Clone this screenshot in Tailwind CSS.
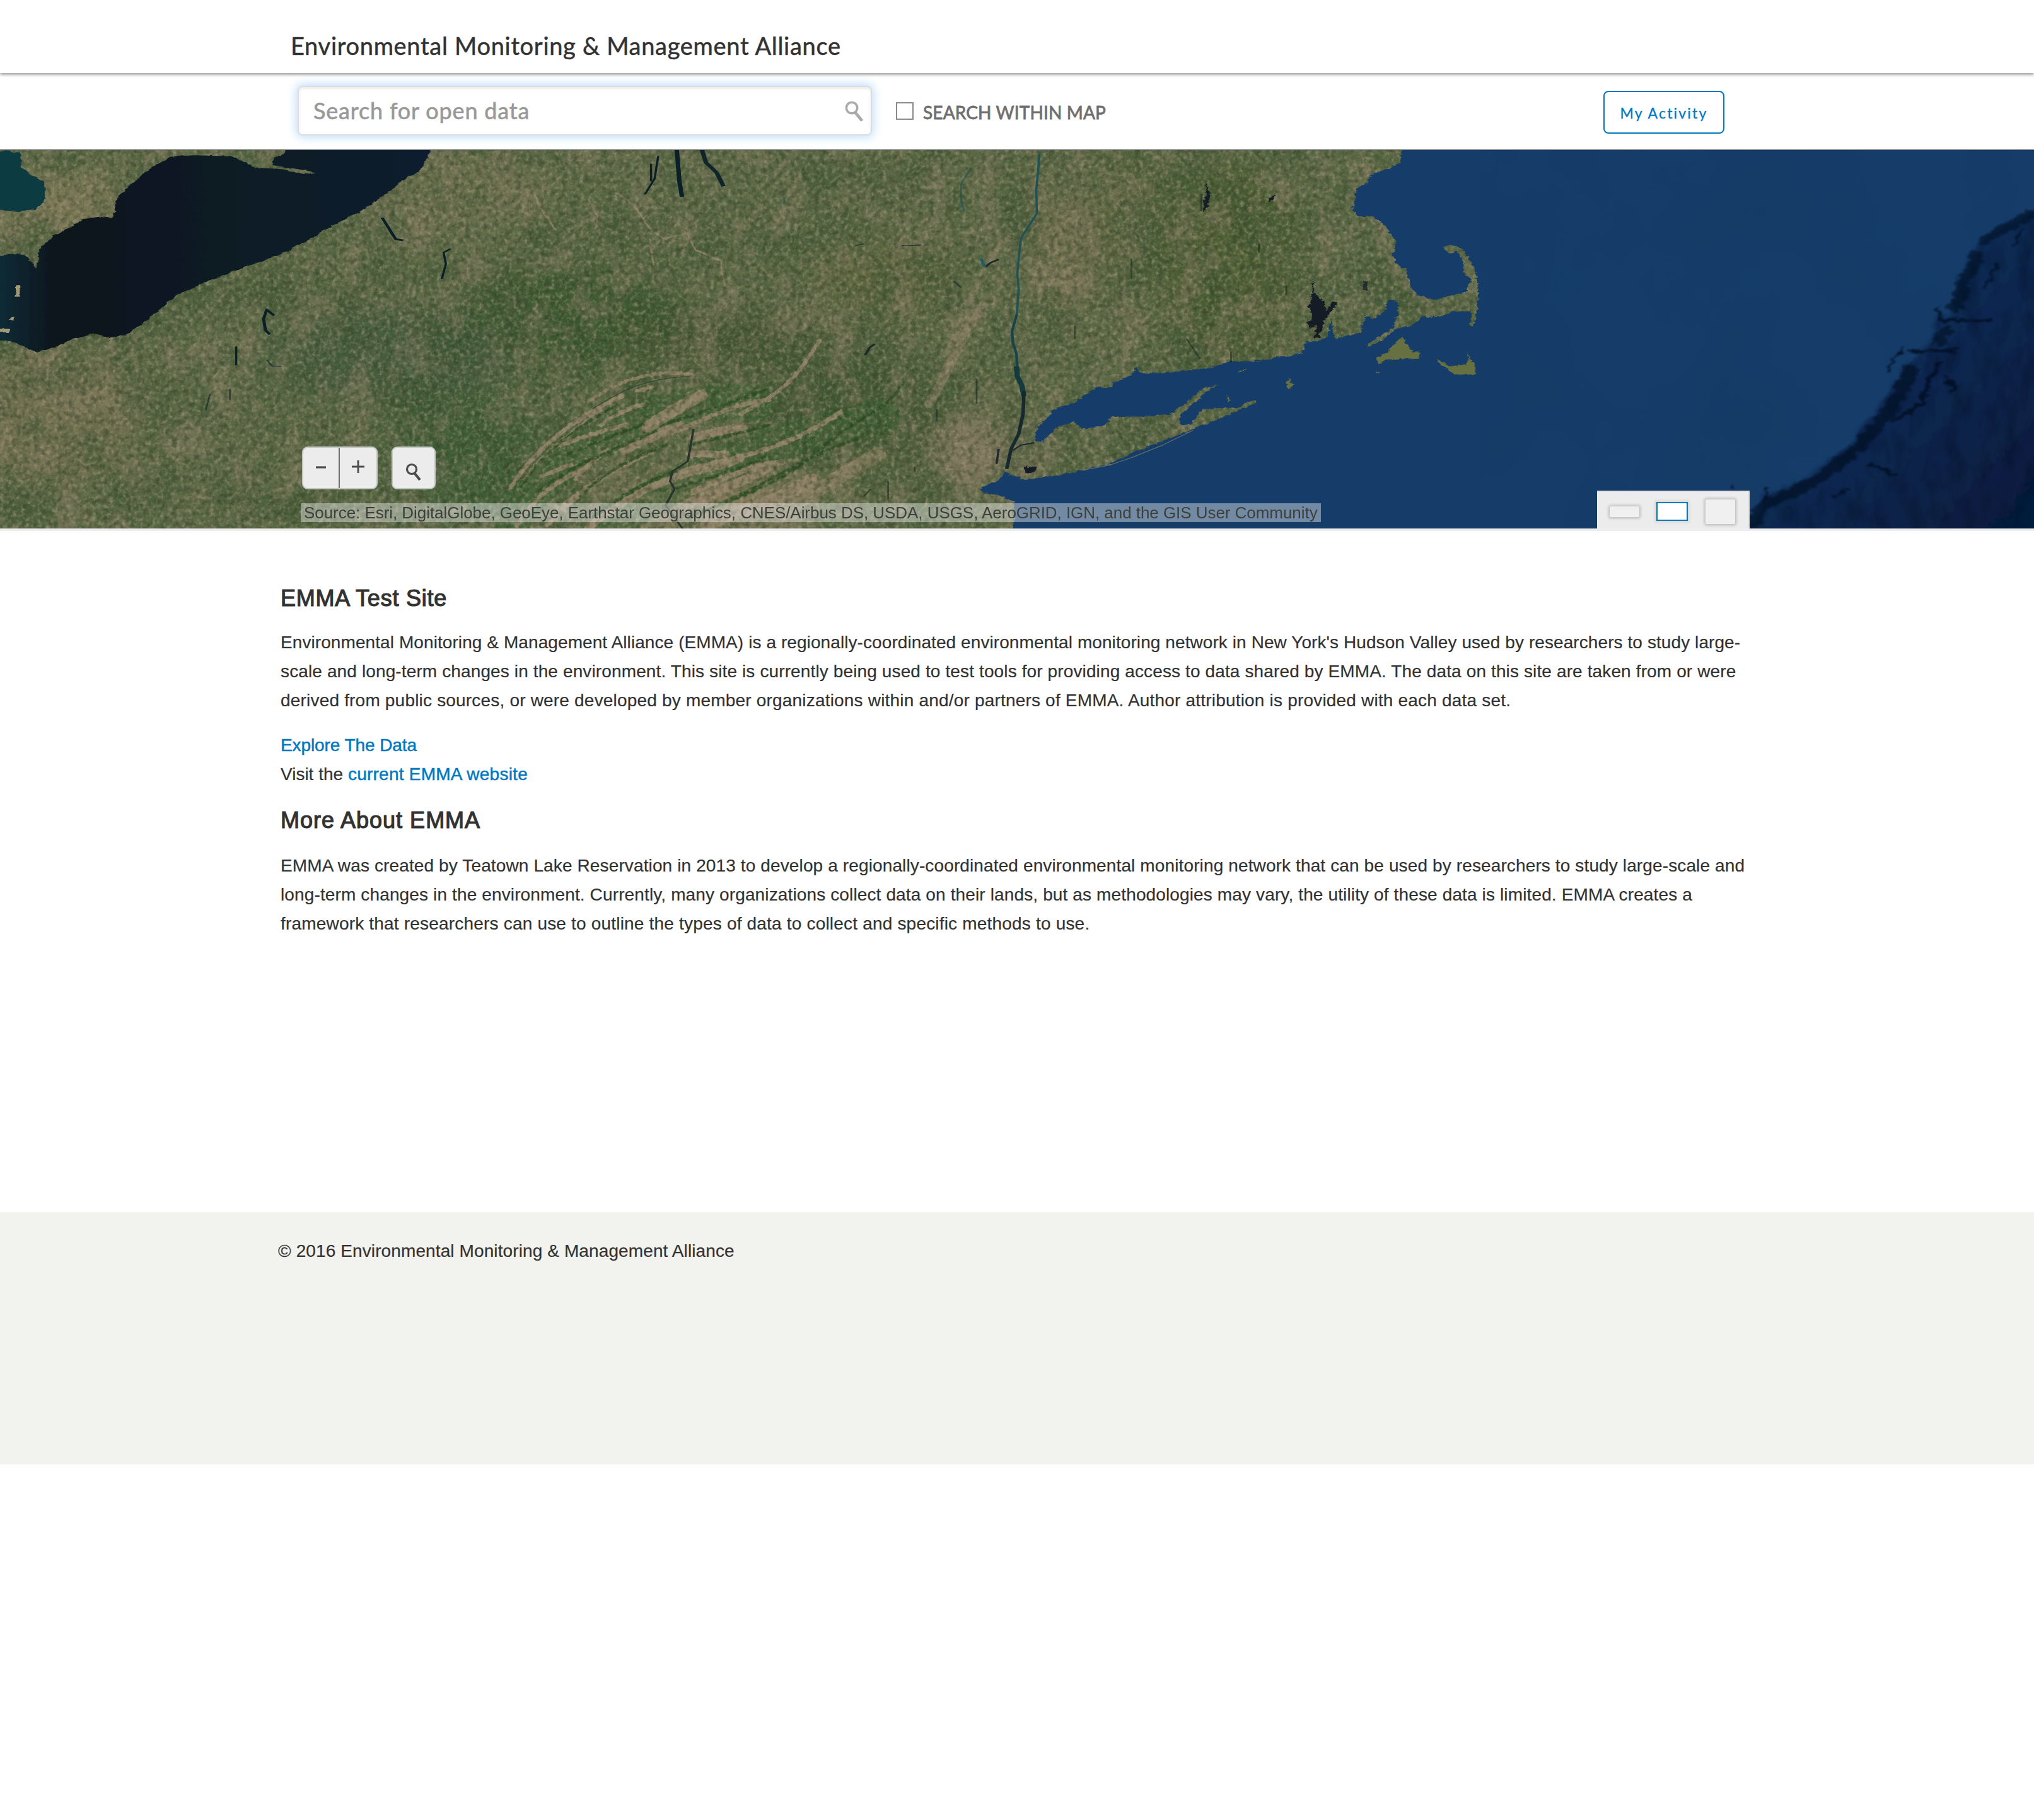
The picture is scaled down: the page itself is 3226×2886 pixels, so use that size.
<!DOCTYPE html>
<html lang="en">
<head>
<meta charset="utf-8">
<title>Environmental Monitoring &amp; Management Alliance</title>
<script src="https://cdn.jsdelivr.net/npm/@tailwindcss/browser@4"></script>
</head>
<body class="w-[3226px] h-[2886px] overflow-hidden bg-white text-[#323232] font-['Liberation_Sans',Arial,sans-serif]">

<header class="relative z-10 h-[116px] bg-white shadow-[0_2px_5px_0_rgba(0,0,0,0.45)] flex">
  <h1 class="pl-[461px] pt-[48px] leading-[48px] text-[38px] tracking-[0.7px] font-['Lato',sans-serif] [-webkit-text-stroke:0.5px_#323232] whitespace-nowrap">Environmental Monitoring &amp; Management Alliance</h1>
</header>

<div class="h-[122px] bg-white border-b-2 border-[#999b9b] flex items-start font-['Lato',sans-serif]">
  <div class="ml-[472px] mt-[20px] w-[911px] h-[79px] rounded-[8px] border-2 border-[#dedede] bg-white shadow-[0_0_14px_3px_rgba(160,208,252,0.65),inset_0_3px_4px_rgba(0,0,0,0.08)] flex items-center justify-between pl-[23px] pr-[10px]">
    <span class="text-[36px] leading-[48px] tracking-[0.83px] -mt-[2px] text-[#999] [-webkit-text-stroke:0.6px_#999]">Search for open data</span>
    <svg class="w-[32px] h-[34px]" viewBox="0 0 32 34" fill="none" stroke="#a9a9a9"><circle cx="12" cy="12" r="8.7" stroke-width="3.6"/><path d="M17.5 19.500L27 31" stroke-width="4.800" stroke-linecap="round"/></svg>
  </div>
  <div class="ml-[38px] mt-[46px] w-[28px] h-[28px] border-2 border-[#8a8a8a]"></div>
  <span class="ml-[15px] mt-[42px] text-[28px] leading-[40px] tracking-[0.15px] text-[#6f6f6f] [-webkit-text-stroke:0.8px_#6f6f6f] whitespace-nowrap">SEARCH WITHIN MAP</span>
  <div class="ml-auto mr-[491px] mt-[28px] w-[192px] h-[68px] rounded-[8px] border-2 border-[#0079c1] flex items-center justify-center pt-[2px] text-[23px] leading-[32px] tracking-[2.2px] text-[#0079c1] [-webkit-text-stroke:0.3px_#0079c1] whitespace-nowrap">My Activity</div>
</div>

<section class="relative h-[604px] border-b-4 border-[#eeeeee] overflow-hidden bg-[#133e69]">
  <svg class="absolute left-0 top-0 w-[3226px] h-[600px]" viewBox="0 238 3226 600" preserveAspectRatio="none">
    <defs>
      <filter id="speckTan" x="0" y="0" width="1" height="1" color-interpolation-filters="sRGB"><feTurbulence type="fractalNoise" baseFrequency="0.15" numOctaves="4" seed="4"/><feColorMatrix values="0 0 0 0 0.64  0 0 0 0 0.60  0 0 0 0 0.49  2.6 0 0 0 -1.15"/></filter>
      <filter id="speckDark" x="0" y="0" width="1" height="1" color-interpolation-filters="sRGB"><feTurbulence type="fractalNoise" baseFrequency="0.11" numOctaves="4" seed="19"/><feColorMatrix values="0 0 0 0 0.18  0 0 0 0 0.24  0 0 0 0 0.14  0 2.6 0 0 -1.1"/></filter>
      <filter id="patchTan" x="0" y="0" width="1" height="1" color-interpolation-filters="sRGB"><feTurbulence type="fractalNoise" baseFrequency="0.022 0.015" numOctaves="6" seed="14"/><feColorMatrix values="0 0 0 0 0.55  0 0 0 0 0.50  0 0 0 0 0.40  5 0 0 0 -2.35"/></filter>
      <filter id="patchGreen" x="0" y="0" width="1" height="1" color-interpolation-filters="sRGB"><feTurbulence type="fractalNoise" baseFrequency="0.014 0.012" numOctaves="6" seed="31"/><feColorMatrix values="0 0 0 0 0.24  0 0 0 0 0.34  0 0 0 0 0.20  0 4 0 0 -1.85"/></filter>
      <filter id="seabed" x="0" y="0" width="1" height="1" color-interpolation-filters="sRGB"><feTurbulence type="fractalNoise" baseFrequency="0.006 0.005" numOctaves="4" seed="2"/><feColorMatrix values="0 0 0 0 0.06  0 0 0 0 0.19  0 0 0 0 0.36  1.2 0 0 0 -0.5"/></filter>
      <filter id="abyss" x="0" y="0" width="1" height="1" color-interpolation-filters="sRGB"><feTurbulence type="fractalNoise" baseFrequency="0.035 0.018" numOctaves="4" seed="12"/><feColorMatrix values="0 0 0 0 0.01  0 0 0 0 0.03  0 0 0 0 0.1  3 0 0 0 -1.35"/></filter>
      <filter id="coast" x="-0.02" y="-0.02" width="1.04" height="1.04"><feTurbulence type="fractalNoise" baseFrequency="0.09" numOctaves="3" seed="5"/><feDisplacementMap in="SourceGraphic" scale="14" xChannelSelector="R" yChannelSelector="G"/></filter>
      <filter id="wobble" x="-0.1" y="-0.1" width="1.2" height="1.2"><feTurbulence type="fractalNoise" baseFrequency="0.05" numOctaves="3" seed="9"/><feDisplacementMap in="SourceGraphic" scale="12" xChannelSelector="R" yChannelSelector="G"/><feGaussianBlur stdDeviation="0.8"/></filter>
      <filter id="rough" x="-0.2" y="-0.2" width="1.4" height="1.4"><feTurbulence type="fractalNoise" baseFrequency="0.04" numOctaves="3" seed="7"/><feDisplacementMap in="SourceGraphic" scale="34" xChannelSelector="R" yChannelSelector="G"/><feGaussianBlur stdDeviation="2.5"/></filter>
      <filter id="soft" x="-0.3" y="-0.3" width="1.6" height="1.6"><feGaussianBlur stdDeviation="28"/></filter>
      <linearGradient id="lake" x1="0" y1="0" x2="1" y2="0"><stop offset="0" stop-color="#0b2f3a"/><stop offset="0.14" stop-color="#07161d"/><stop offset="0.5" stop-color="#081a23"/><stop offset="1" stop-color="#0a1f2e"/></linearGradient>
      <linearGradient id="deep" x1="0" y1="0" x2="1" y2="1"><stop offset="0" stop-color="#103461"/><stop offset="0.55" stop-color="#0a2850"/><stop offset="1" stop-color="#051737"/></linearGradient>
      <clipPath id="deepClip"><path transform="translate(2126 220) scale(.70151 .39667)" d="M1568 275 1500 350 1440 420 1420 500 1395 560 1380 680 1350 720 1345 800 1290 890 1225 1050 1150 1220 1060 1350 960 1430 900 1563H1570Z"/></clipPath>
    </defs>

    <!-- land base and broad tone variation -->
    <rect y="236" width="2400" height="602" fill="#5b6946"/>
    <g filter="url(#soft)">
      <ellipse cx="900" cy="510" rx="190" ry="90" fill="#3c5a32"/>
      <ellipse cx="620" cy="560" rx="200" ry="70" fill="#455d3c"/>
      <ellipse cx="740" cy="720" rx="130" ry="100" fill="#415f39"/>
      <ellipse cx="1350" cy="650" rx="160" ry="90" fill="#465c38"/>
      <ellipse cx="1150" cy="540" rx="160" ry="40" fill="#475935"/>
      <ellipse cx="1400" cy="440" rx="120" ry="50" fill="#5b653c"/>
      <ellipse cx="1950" cy="420" rx="110" ry="170" fill="#4d5f36"/>
      <ellipse cx="1790" cy="330" rx="50" ry="120" fill="#55643c"/>
      <ellipse cx="1690" cy="400" rx="60" ry="110" fill="#6f7050"/>
      <ellipse cx="1570" cy="720" rx="90" ry="60" fill="#82785f"/>
      <ellipse cx="100" cy="330" rx="110" ry="60" fill="#7d7956"/>
      <ellipse cx="80" cy="660" rx="140" ry="110" fill="#70704f"/>
      <ellipse cx="700" cy="300" rx="180" ry="60" fill="#6c714f"/>
      <ellipse cx="1130" cy="800" rx="150" ry="50" fill="#877b5b"/>
    </g>
    <rect y="236" width="2400" height="602" filter="url(#patchTan)" opacity=".45"/>
    <rect y="236" width="2400" height="602" filter="url(#patchGreen)" opacity=".5"/>

    <!-- Appalachian ridges -->
    <g transform="translate(700 240) scale(.33333)" filter="url(#wobble)" fill="none" stroke-linecap="round">
      <path stroke="#3a5f32" stroke-width="170" opacity=".5" d="M330 1760C600 1400 1000 1150 1500 1200M800 1780C1200 1500 1500 1400 2100 1260"/>
      <g stroke="#94846a" stroke-width="20" opacity=".9">
        <path d="M330 1600C420 1450 600 1280 860 1165"/><path d="M400 1560C480 1440 620 1340 760 1230"/>
        <path d="M560 1400C700 1350 800 1320 880 1300"/><path d="M640 1560C680 1500 740 1460 790 1420"/>
        <path d="M760 1300C820 1260 880 1220 960 1205"/><path d="M930 1140 1000 1120"/>
        <path d="M480 1545C540 1520 580 1500 620 1490"/><path stroke-width="46" d="M870 1420C960 1370 1050 1340 1130 1300"/>
        <path stroke-width="56" d="M980 1310C1080 1250 1150 1200 1240 1160"/><path stroke-width="16" d="M700 1190C860 1080 1000 1040 1200 1060"/>
        <path stroke-width="34" d="M1180 1440C1260 1430 1300 1450 1360 1440"/><path stroke-width="46" d="M1130 1540C1230 1500 1330 1500 1420 1460"/>
        <path stroke-width="40" d="M1200 1360C1290 1340 1380 1310 1440 1320"/><path stroke-width="20" d="M1100 1340C1280 1260 1400 1200 1560 1180"/>
        <path d="M360 1780C440 1640 560 1560 700 1500"/><path d="M500 1780C640 1640 760 1540 900 1480"/>
        <path stroke-width="34" d="M700 1790C840 1680 960 1600 1100 1560"/><path d="M560 1700C680 1600 800 1520 1000 1430"/>
        <path stroke-width="44" d="M1150 1690C1280 1620 1420 1590 1560 1500"/><path stroke-width="60" d="M1260 1780C1400 1700 1600 1680 1760 1560"/>
        <path stroke-width="18" d="M1420 1250C1500 1210 1600 1150 1660 1090S1760 960 1800 900"/>
        <path stroke-width="30" d="M1200 1620C1400 1520 1500 1490 1620 1480"/><path stroke-width="22" d="M1300 1480C1500 1440 1700 1380 1900 1240"/>
        <path stroke-width="70" d="M1620 1720C1740 1640 1900 1540 2080 1440" opacity=".7"/>
        <path stroke-width="44" d="M2320 1200C2400 1080 2460 900 2560 760" opacity=".6"/>
        <path stroke-width="30" d="M2420 920C2500 780 2560 540 2700 400" opacity=".4"/>
      </g>
      <g stroke="#2c4f26" stroke-width="14" opacity=".85">
        <path d="M380 1600C460 1460 620 1320 820 1215"/><path d="M600 1440C740 1380 840 1340 960 1300"/><path d="M460 1620C600 1500 780 1440 1020 1330"/>
        <path d="M660 1640C760 1540 880 1470 1080 1390"/><path d="M1100 1610C1280 1540 1400 1530 1540 1450"/><path d="M1060 1300C1240 1240 1400 1190 1560 1130"/>
        <path d="M1180 1400C1320 1360 1440 1340 1560 1300"/><path d="M1180 1740C1400 1640 1600 1600 1800 1420S2100 1260 2200 1100"/><path d="M1320 1680C1600 1560 1700 1460 2000 1360"/><path d="M720 1740C880 1620 1000 1560 1120 1520"/>
      </g>
      <g stroke="#9b8b70" stroke-width="8" opacity=".8">
        <path d="M840 200 920 260 1000 380 1060 415 1170 390 1210 470 1330 520 1340 600 1350 640"/><path d="M990 420 1010 540"/><path d="M700 230 745 310 735 370"/><path d="M440 200 480 280 540 370"/>
      </g>
    </g>
    <rect y="236" width="2400" height="602" filter="url(#speckTan)" opacity=".6"/>
    <rect y="236" width="2400" height="602" filter="url(#speckDark)" opacity=".5"/>

    <!-- western lakes -->
    <g transform="translate(0 220) scale(.70151 .39667)">
      <g filter="url(#wobble)">
        <path fill="#0d3b42" d="M-20 60 15 48 45 55 50 120 100 175 103 240 80 285 40 290-20 280Z"/>
        <path fill="url(#lake)" d="M650 30 645 60 620 75 615 105 660 118 715 135 690 142 640 122 575 115 550 90 520 70 440 66 385 72 330 130 265 230 255 318 225 312 190 320 120 390 90 440 82 520 65 475 40 458-20 470V800L35 815 85 855 130 828 165 800 210 778 240 792 280 788 330 730 400 622 470 568 530 530 590 490 650 450 700 400 740 360 820 285 870 225 910 165 950 130 977 30Z"/>
        <path fill="#a59a78" d="M34 588h12v46H36zM0 760h22v14H0zM22 712h10v14H22z"/>
      </g>
      <g fill="none" stroke="#0b1f27" stroke-linejoin="round" stroke-width="7">
        <path d="M864 316 878 355 885 375 895 402 912 406"/><path stroke-width="5" d="M1018 440 1003 455 1008 500 999 560"/>
        <path d="M620 706 603 684 596 720 600 765 610 782"/><path stroke-width="5" d="M534 830V905"/><path stroke-width="4" opacity=".6" d="M520 1000V1045M475 1020 465 1085M604 885 615 908 635 910"/>
        <path stroke-width="5" d="M1488 70 1480 160 1458 222M1472 100V170"/><path stroke-width="10" d="M1530 40 1536 170 1542 232"/>
        <path stroke="#28332a" stroke-width="5" d="M1568 1160 1555 1290 1520 1330 1515 1370 1525 1400 1505 1465 1545 1563"/><path stroke="#28332a" stroke-width="3" opacity=".6" d="M1340 1080C1400 1010 1460 955 1560 950"/>
      </g>
    </g>

    <!-- Atlantic coast, Long Island and Cape Cod -->
    <g transform="translate(1100 220) scale(.70151 .39667)">
      <g filter="url(#coast)">
        <path fill="#133e69" d="M1603 20 1598 95 1570 120 1530 145 1525 175 1500 195 1490 280 1500 310 1533 310 1563 345 1588 410 1581 470 1593 510 1613 520 1620 590 1638 625 1678 645 1703 630 1748 612 1758 560 1741 540 1738 480 1725 450 1708 460 1693 432 1718 425 1743 450 1763 510 1773 570 1775 640 1771 690 1763 755 1755 750 1760 690 1718 690 1688 710 1648 710 1628 745 1588 760 1560 800 1525 835 1520 825 1580 760 1593 700 1591 650 1571 645 1563 690 1538 720 1523 710 1513 740 1508 775 1478 785 1450 805 1440 715 1435 790 1410 810 1385 810 1375 860 1320 875 1270 890 1210 890 1170 915 1120 925 1060 935 1010 938 1000 910 990 945 950 975 945 995 910 995 880 1030 860 1055 810 1085 805 1110 780 1145 770 1205 785 1215 800 1190 825 1150 860 1130 880 1160 930 1145 945 1112 1030 1110 1080 1100 1110 1060 1150 1000 1190 980 1160 1010 1110 1090 1095 1120 1105 1145 1125 1140 1150 1080 1200 1075 1230 1075 1265 1045 1272 1055 1200 1110 1110 1175 1000 1250 940 1300 830 1345 735 1365 740 1352 715 1345 705 1330 690 1365 650 1395 655 1415 700 1430 725 1455 722 1590H3060V20Z"/>
        <g fill="#66703f">
          <path d="M1603 795 1615 830 1625 850 1640 850 1640 880 1600 878 1565 885 1552 902 1542 878 1565 860 1590 810Z"/>
          <path d="M1748 850 1756 880 1767 900V942H1720L1690 905 1680 880 1710 908 1745 905 1752 880Z"/>
          <path d="M1347 955 1355 990 1345 1002 1338 985ZM1205 1020 1215 1045 1208 1055ZM1255 918 1230 935 1235 925ZM1542 932h6v6h-6z"/>
        </g>
        <g fill="#181f27">
          <path d="M1400 560 1405 620 1425 650 1430 690 1445 650 1455 655 1430 720 1415 790 1405 800 1408 740 1395 760 1385 735 1400 720 1390 670 1398 640Z"/>
          <path d="M1160 165 1168 230 1160 285 1150 290 1158 220ZM1300 235 1315 225 1310 245 1300 250ZM748 1310 775 1310 765 1340 750 1335Z"/>
          <path d="M1515 570 1525 575 1523 605 1512 600Z" opacity=".8"/>
        </g>
      </g>
      <g fill="none" stroke="#133a3c" stroke-linejoin="round">
        <path stroke="#1d5257" stroke-width="5" d="M782 60 780 110 775 200 776 300 750 370 740 400 735 480 732 540 735 600 731 700"/>
        <path stroke="#17434a" stroke-width="6" d="M731 700 720 770 722 815 730 860 732 910"/>
        <path stroke-width="12" d="M730 910 732 950 742 985 747 1030"/>
        <path stroke="#17282f" stroke-width="8" d="M747 1010 745 1100 735 1180 718 1240 708 1320"/>
        <path stroke="#1d2a30" stroke-width="5" d="M770 1215 740 1225 722 1245M690 1240 685 1300"/>
        <path stroke="#10242a" stroke-width="10" d="M18 40 28 95 52 135 68 190"/>
        <path stroke="#24544f" stroke-width="4" opacity=".7" d="M628 115 605 180 605 250 612 290M205 235V260"/>
        <path stroke="#1a2a2a" stroke-width="6" d="M690 482 672 495 660 512M410 820 398 835 388 865"/><path stroke="#1a2a2a" stroke-width="4" opacity=".7" d="M470 428 515 425M588 570 605 595M365 428 385 420"/>
        <path stroke="#235b66" stroke-width="7" d="M650 478 658 512"/>
        <path stroke="#1c2a20" stroke-width="4" d="M862 750V800M990 480V560M1148 220V290M1278 420V455M1115 800 1145 880M1215 850V895M500 1310V1330M550 1080V1130M640 960V1060M1340 590V625M400 1400 385 1430M440 1370V1440" opacity=".6"/>
        <path stroke="#8f8a62" stroke-width="3" opacity=".6" d="M1130 1165 1060 1225 990 1275 940 1305 880 1325"/>
      </g>
    </g>

    <!-- ocean floor -->
    <rect x="2350" y="236" width="876" height="602" filter="url(#seabed)" opacity=".35"/>
    <g filter="url(#rough)">
      <path transform="translate(2126 220) scale(.70151 .39667)" fill="url(#deep)" d="M1640 230 1500 350 1440 420 1420 500 1395 560 1380 680 1350 720 1345 800 1290 890 1225 1050 1150 1220 1060 1350 960 1430 900 1620H1640Z"/>
    </g>
    <g clip-path="url(#deepClip)"><rect x="2700" y="236" width="526" height="602" filter="url(#abyss)" opacity=".25"/></g>
    <g transform="translate(2126 220) scale(.70151 .39667)" filter="url(#rough)" fill="none" stroke="#040d20" stroke-linecap="round" stroke-linejoin="round" opacity=".8">
      <path stroke-width="34" opacity=".8" d="M1290 920 1270 1000 1240 1090 1200 1180 1150 1260 1100 1340 1040 1400 960 1460 930 1540"/>
      <path stroke-width="30" opacity=".75" d="M1568 300 1510 350 1450 410M1435 460 1430 520 1410 560 1400 640 1385 680M1370 760 1350 810"/>
      <path stroke-width="12" d="M1355 722 1440 732 1470 720M1290 850 1385 845M1350 900 1330 980 1310 1060 1250 1130M1200 1300 1250 1340M1370 960 1385 1000"/>
      <path stroke-width="6" d="M1275 835 1250 880 1240 930M1352 670 1358 720M1150 1400 1120 1430M1480 500 1460 600M1540 360 1520 430M965 1400 962 1460M885 1380 890 1400"/>
    </g>
  </svg>

  <!-- zoom and locate controls -->
  <div class="absolute left-[479px] top-[470px] flex gap-[22px]">
    <div class="flex w-[120px] h-[68px] rounded-[9px] border-2 border-[#c3c7c2] bg-[#ececec] text-[#4c4c4c]">
      <div class="w-[58px] flex items-center justify-center border-r-2 border-[#6e6e6e]"><svg class="w-[20px] h-[20px]" viewBox="0 0 20 20"><path d="M2 9H18" stroke="#4c4c4c" stroke-width="3.200"/></svg></div>
      <div class="flex-1 flex items-center justify-center"><svg class="w-[20px] h-[20px] -mt-[5px]" viewBox="0 0 20 20"><path d="M0 10H20M10 0V20" stroke="#4c4c4c" stroke-width="2.800"/></svg></div>
    </div>
    <div class="w-[70px] h-[68px] rounded-[9px] border-2 border-[#c3c7c2] bg-[#ececec] flex items-center justify-center"><svg class="w-[28px] h-[30px] mt-[14px]" viewBox="0 0 28 30" fill="none" stroke="#4c4c4c"><circle cx="11" cy="10" r="7.500" stroke-width="3.200"/><path d="M16 17 24 27" stroke-width="4.200"/></svg></div>
  </div>

  <div class="absolute left-[477px] top-[560px] w-[1618px] h-[30px] pl-[5px] bg-white/40 text-[26px] leading-[30px] tracking-[-0.05px] text-[#3c403a] whitespace-nowrap">Source: Esri, DigitalGlobe, GeoEye, Earthstar Geographics, CNES/Airbus DS, USDA, USGS, AeroGRID, IGN, and the GIS User Community</div>

  <!-- map size switcher -->
  <div class="absolute left-[2533px] top-[540px] w-[242px] h-[64px] bg-[#ececec] border-t-2 border-r-2 border-[#e0e0e0] flex items-center pl-[20px]">
    <div class="w-[47px] h-[17px] mt-[1px] rounded-[2px] bg-[#f0f0f0] shadow-[0_0_4px_2px_rgba(0,0,0,0.2)]"></div>
    <div class="ml-[27px] w-[50px] h-[30px] bg-white border-2 border-[#0079c1] shadow-[0_0_4px_2px_rgba(0,0,0,0.1)]"></div>
    <div class="ml-[28px] w-[47px] h-[39px] rounded-[2px] bg-[#f0f0f0] shadow-[0_0_4px_2px_rgba(0,0,0,0.2)]"></div>
  </div>
</section>

<main class="h-[1080px] pl-[445px] pt-[85px] text-[28px] leading-[46px] whitespace-nowrap">
  <h2 class="text-[36px] leading-[44px] tracking-[0.75px] [-webkit-text-stroke:1.2px_#323232]">EMMA Test Site</h2>
  <p class="mt-[25px] [-webkit-text-stroke:0.2px_#323232]">
    <span class="block tracking-[0.083px]">Environmental Monitoring &amp; Management Alliance (EMMA) is a regionally-coordinated environmental monitoring network in New York's Hudson Valley used by researchers to study large-</span>
    <span class="block tracking-[0.125px]">scale and long-term changes in the environment. This site is currently being used to test tools for providing access to data shared by EMMA. The data on this site are taken from or were</span>
    <span class="block tracking-[0.19px]">derived from public sources, or were developed by member organizations within and/or partners of EMMA. Author attribution is provided with each data set.</span>
  </p>
  <p class="mt-[25px] [-webkit-text-stroke:0.2px_#323232]">
    <a class="block tracking-[-0.09px] text-[#0079c1] [-webkit-text-stroke:0.5px_#0079c1]">Explore The Data</a>
    <span class="block">Visit the <a class="tracking-[0.25px] text-[#0079c1] [-webkit-text-stroke:0.5px_#0079c1]">current EMMA website</a></span>
  </p>
  <h2 class="mt-[28px] text-[36px] leading-[44px] tracking-[1px] [-webkit-text-stroke:1.2px_#323232]">More About EMMA</h2>
  <p class="mt-[27px] [-webkit-text-stroke:0.2px_#323232]">
    <span class="block tracking-[0.125px]">EMMA was created by Teatown Lake Reservation in 2013 to develop a regionally-coordinated environmental monitoring network that can be used by researchers to study large-scale and</span>
    <span class="block tracking-[0.132px]">long-term changes in the environment. Currently, many organizations collect data on their lands, but as methodologies may vary, the utility of these data is limited. EMMA creates a</span>
    <span class="block tracking-[0.19px]">framework that researchers can use to outline the types of data to collect and specific methods to use.</span>
  </p>
</main>

<footer class="h-[400px] bg-[#f2f2ee] pl-[441px] pt-[39px] text-[28px] leading-[46px] tracking-[0.11px] [-webkit-text-stroke:0.2px_#323232]">© 2016 Environmental Monitoring &amp; Management Alliance</footer>
</body>
</html>
